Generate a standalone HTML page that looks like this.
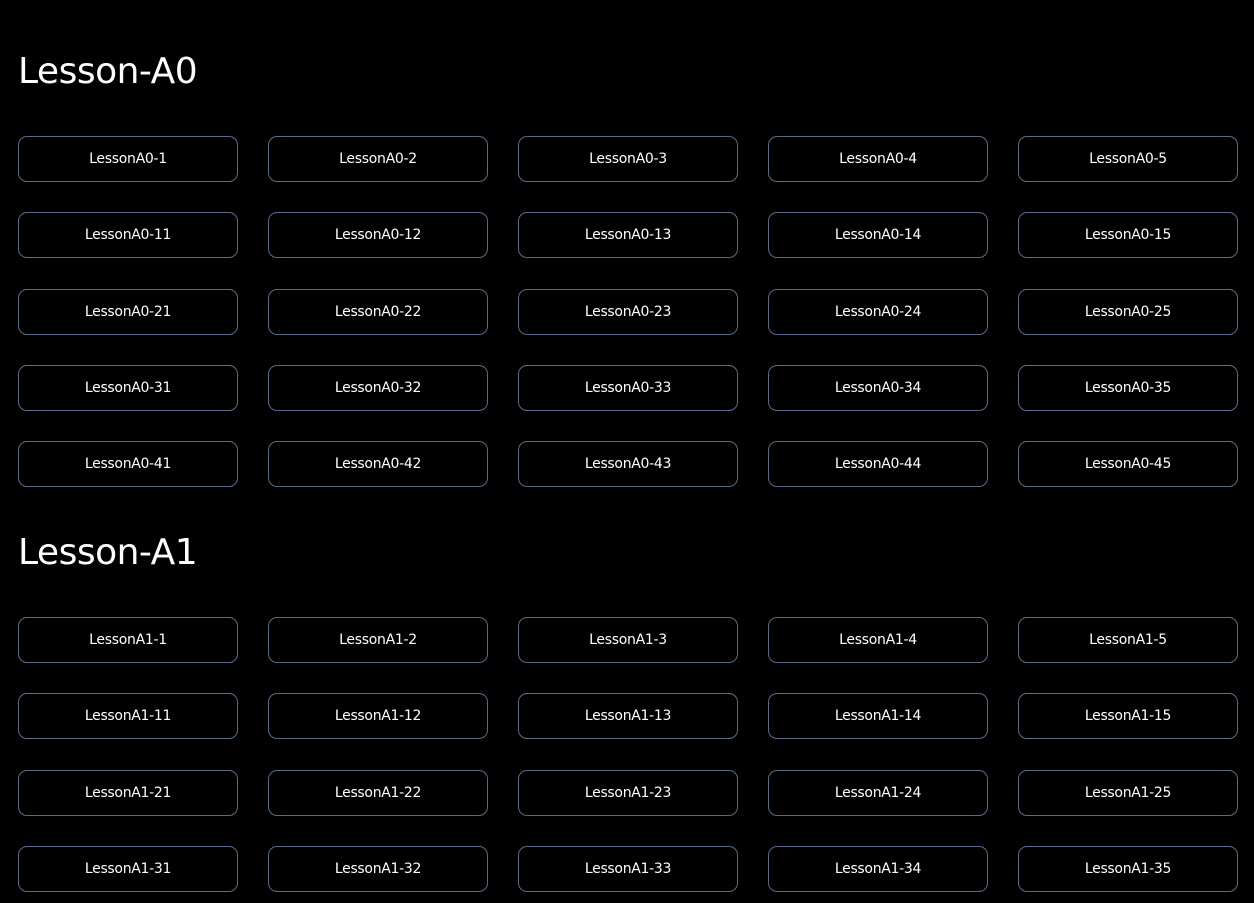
<!DOCTYPE html>
<html><head><meta charset="utf-8"><style>
html,body{margin:0;padding:0;background:#000;width:1254px;height:903px;overflow:hidden}
body{font-family:"DejaVu Sans","Liberation Sans",sans-serif;color:#fff;position:relative}
.sec{position:absolute;left:18px;width:1220px}
h1{position:absolute;left:0;top:50px;margin:0;font-weight:normal;font-size:36px;line-height:44px;letter-spacing:-0.5px;font-family:"DejaVu Sans","Liberation Sans",sans-serif}
.grid{position:absolute;top:136px;left:0;display:grid;grid-template-columns:repeat(5,220px);column-gap:30px;row-gap:30.25px}
.b{box-sizing:border-box;height:46px;border:1px solid #5a6a88;border-radius:9px;display:flex;align-items:center;justify-content:center;font-size:14px;letter-spacing:-0.3px}
</style></head><body>
<div class="sec" style="top:0">
<h1>Lesson-A0</h1>
<div class="grid">
<div class="b">LessonA0-1</div><div class="b">LessonA0-2</div><div class="b">LessonA0-3</div><div class="b">LessonA0-4</div><div class="b">LessonA0-5</div>
<div class="b">LessonA0-11</div><div class="b">LessonA0-12</div><div class="b">LessonA0-13</div><div class="b">LessonA0-14</div><div class="b">LessonA0-15</div>
<div class="b">LessonA0-21</div><div class="b">LessonA0-22</div><div class="b">LessonA0-23</div><div class="b">LessonA0-24</div><div class="b">LessonA0-25</div>
<div class="b">LessonA0-31</div><div class="b">LessonA0-32</div><div class="b">LessonA0-33</div><div class="b">LessonA0-34</div><div class="b">LessonA0-35</div>
<div class="b">LessonA0-41</div><div class="b">LessonA0-42</div><div class="b">LessonA0-43</div><div class="b">LessonA0-44</div><div class="b">LessonA0-45</div>
</div></div>
<div class="sec" style="top:481px">
<h1>Lesson-A1</h1>
<div class="grid">
<div class="b">LessonA1-1</div><div class="b">LessonA1-2</div><div class="b">LessonA1-3</div><div class="b">LessonA1-4</div><div class="b">LessonA1-5</div>
<div class="b">LessonA1-11</div><div class="b">LessonA1-12</div><div class="b">LessonA1-13</div><div class="b">LessonA1-14</div><div class="b">LessonA1-15</div>
<div class="b">LessonA1-21</div><div class="b">LessonA1-22</div><div class="b">LessonA1-23</div><div class="b">LessonA1-24</div><div class="b">LessonA1-25</div>
<div class="b">LessonA1-31</div><div class="b">LessonA1-32</div><div class="b">LessonA1-33</div><div class="b">LessonA1-34</div><div class="b">LessonA1-35</div>
</div></div>
</body></html>
